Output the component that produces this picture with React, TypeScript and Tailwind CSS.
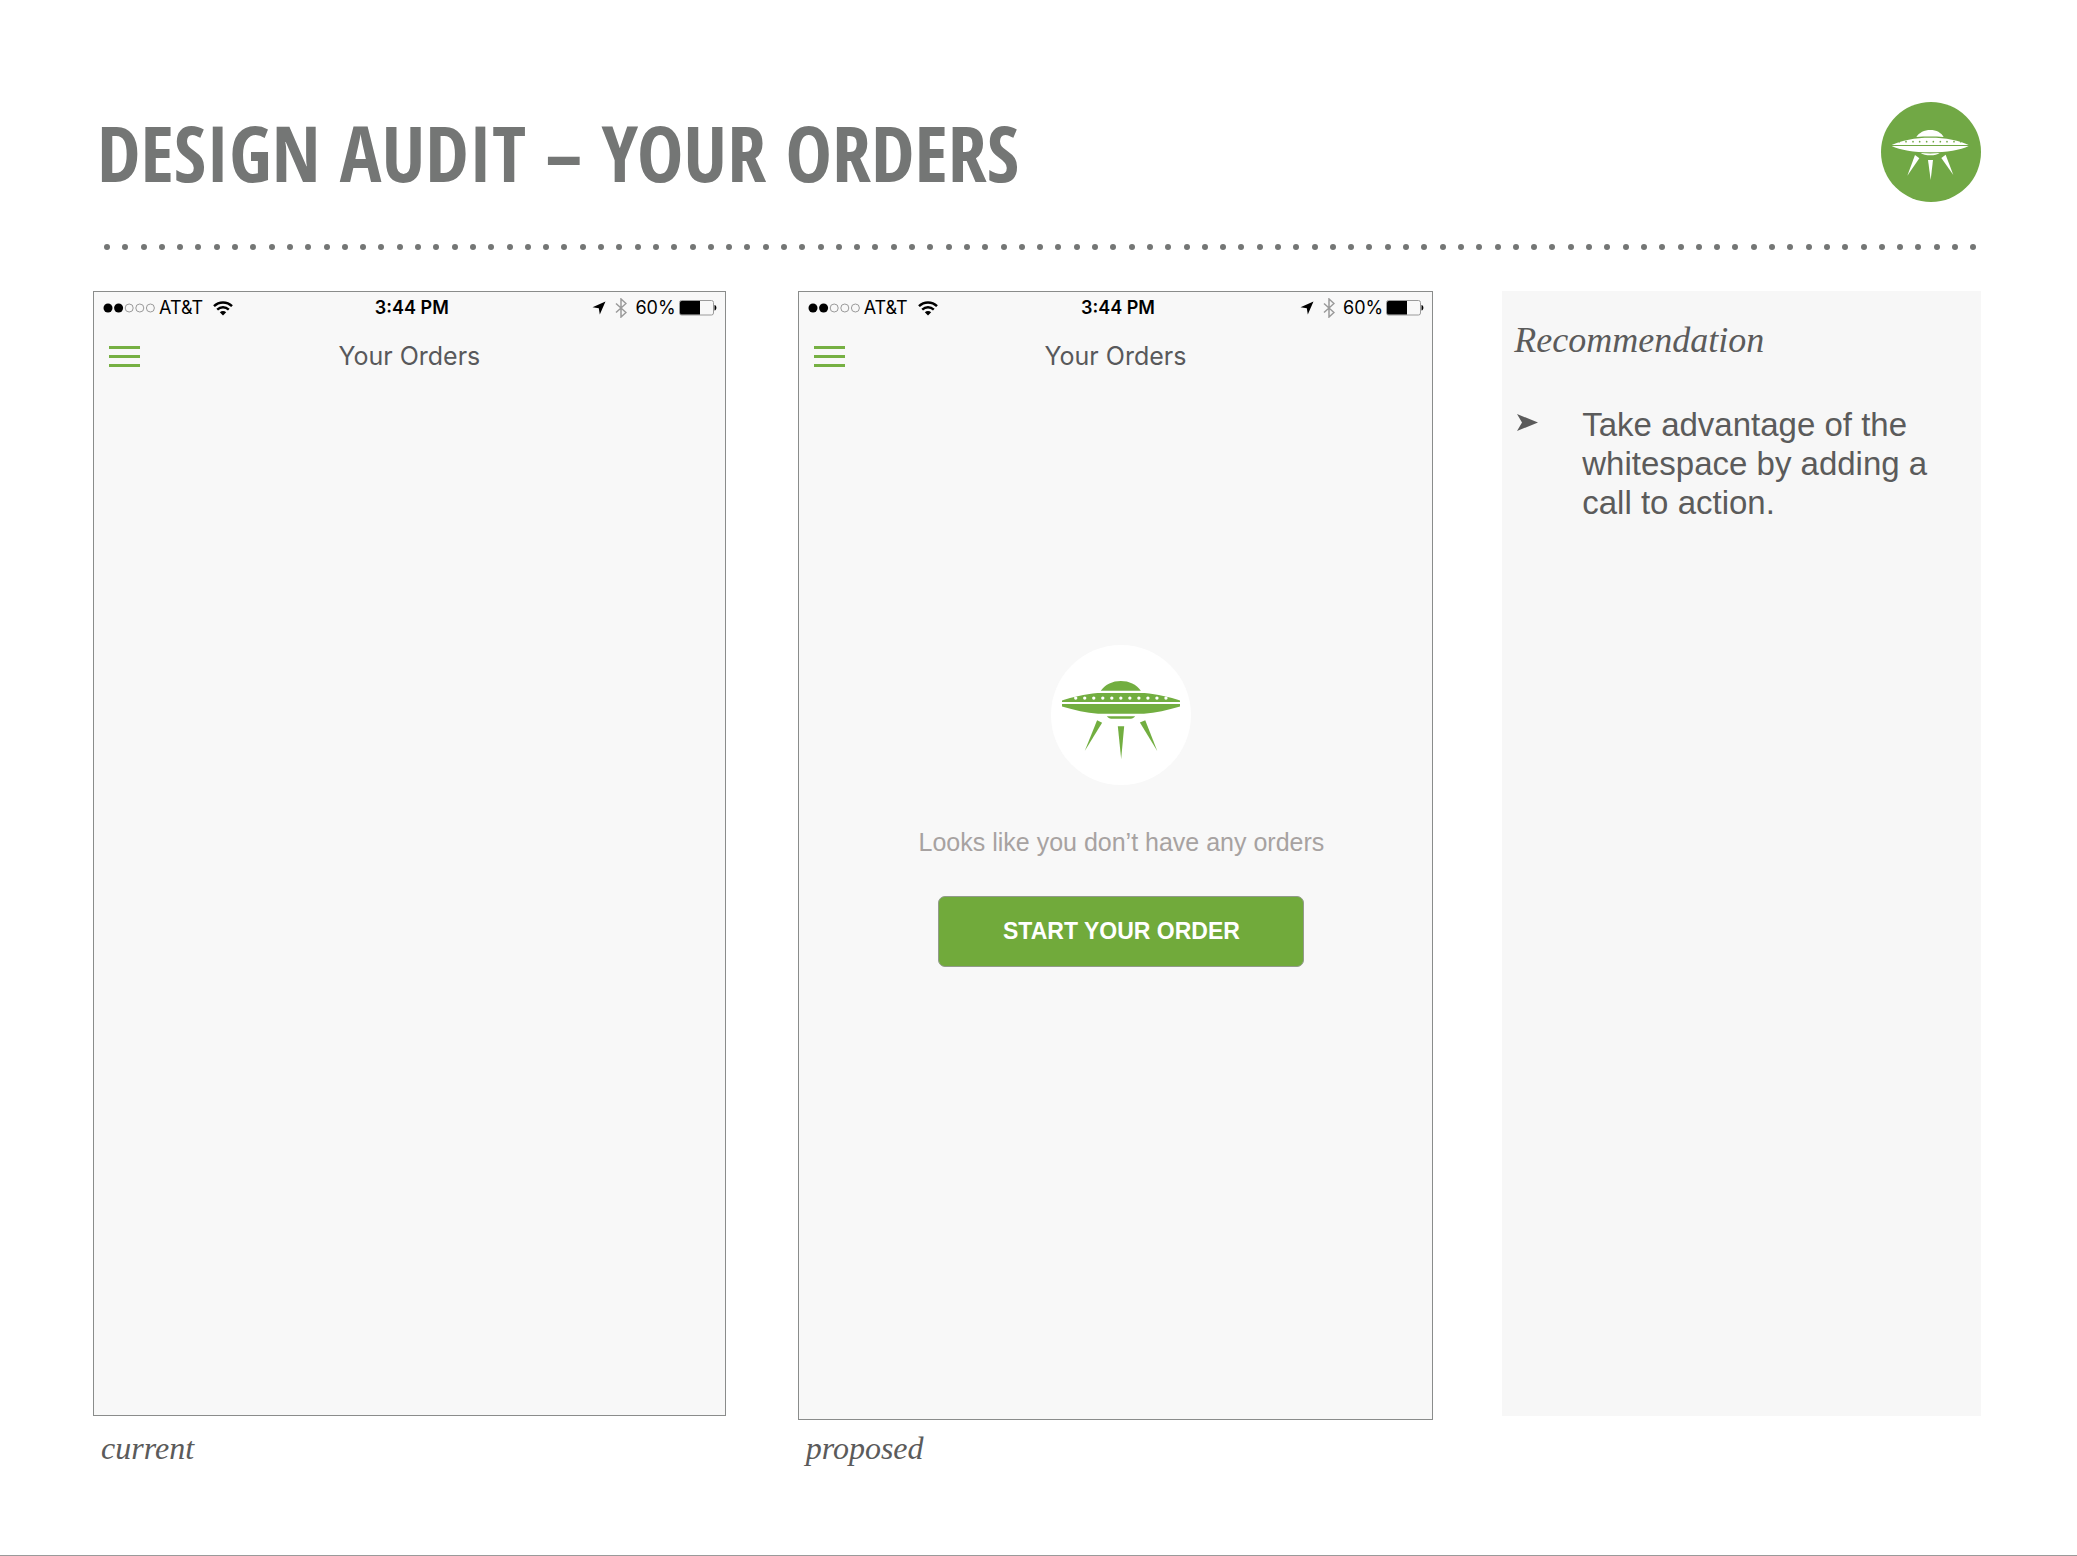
import type { ReactNode } from 'react';

const DOT_COUNT = 103;
const RIVETS = [108, 135, 162, 189, 216, 243, 270, 297, 324, 351, 378];
const LOGO_RIVETS = [177, 197, 218, 238, 259, 279, 300, 320, 341, 361];

function Logo() {
  return (
    <div className="size-[100px] shrink-0 rounded-full bg-[#71a845] text-white">
      <svg viewBox="122 66 300 300" className="size-full" fill="currentColor" role="img" aria-label="Logo">
        <path d="M228 171c8-13 24-21 42-21s33 8 40 21c-26-2-56-2-82 0z" />
        <path d="M154 195c28-14 70-22 116-22s88 8 115 22z" />
        <path d="M154 198h231c-24 12-66 19-115 19s-91-7-116-19z" />
        <path d="M241 219c19 2 38 2 57 0-6 5-16 7-28 7s-23-2-29-7z" />
        <path d="M224 225l13 10-36 52z" />
        <path d="M263 240h15l-7 60z" />
        <path d="M303 234l13-10 23 61z" />
        <g fill="#71a845">
          {LOGO_RIVETS.map((x) => (
            <circle key={x} cx={x} cy="185" r="2.5" />
          ))}
        </g>
      </svg>
    </div>
  );
}

function Ufo() {
  return (
    <svg viewBox="67 153 353 233" className="h-[78px] w-[118px]" fill="currentColor" aria-hidden="true">
      {/* dome */}
      <path d="M183 182C197 163 218 153 243 153s46 10 60 29z" />
      {/* saucer */}
      <path d="M67 216v-5c30-9 68-18 106-22h141c38 4 76 13 106 22v5z" />
      <path d="M67 222h353v7c-38 11-72 19-108 22H175c-36-3-70-11-108-22z" />
      <path d="M201 258h85c-4 4-8 7-13 8h-59c-5-1-9-4-13-8z" />
      {/* legs */}
      <path d="M172 270l15 8-52 84z" />
      <path d="M234 288h19l-9 98z" />
      <path d="M300 277l16-7 36 92z" />
      <g fill="#fff">
        {RIVETS.map((x) => (
          <circle key={x} cx={x} cy="204" r="5" />
        ))}
      </g>
    </svg>
  );
}

function StatusBar() {
  return (
    <div className="grid grid-cols-[1fr_auto_1fr] items-center pt-[2px] pl-[9px] pr-2 h-[30px] text-lg leading-[24px] text-black">
      <div className="flex items-center">
        <svg width="52" height="10" viewBox="0 0 52 10" aria-hidden="true">
          <circle cx="5" cy="5" r="4.5" />
          <circle cx="15.6" cy="5" r="4.5" />
          <g fill="none" stroke="#9a9a9a" strokeWidth="1">
            <circle cx="26.2" cy="5" r="4" />
            <circle cx="36.8" cy="5" r="4" />
            <circle cx="47.4" cy="5" r="4" />
          </g>
        </svg>
        <span className="ml-1">AT&amp;T</span>
        <svg className="ml-[10px]" width="20" height="15" viewBox="0 0 20 15" fill="none" stroke="#000" strokeWidth="2.4" aria-hidden="true">
          <path d="M1 5.2C6 .2 14 .2 19 5.2" />
          <path d="M4.2 8.6c3.4-3.2 8.2-3.2 11.6 0" />
          <path d="M10 14.5l-3.2-3.3c1.9-1.6 4.5-1.6 6.4 0z" fill="#000" stroke="none" />
        </svg>
      </div>
      <span className="pl-1 font-semibold">3:44 PM</span>
      <div className="flex items-center justify-end">
        <svg width="14" height="14" viewBox="0 0 14 14" aria-hidden="true">
          <path d="M13.5.5L7.8 13.5 6.8 7.2.5 6.3z" />
        </svg>
        <svg className="ml-[9px]" width="12" height="20" viewBox="0 0 12 20" fill="none" stroke="#9a9a9a" strokeWidth="1.5" aria-hidden="true">
          <path d="M1 5.5l10 9-5 4.5V1l5 4.5-10 9" />
        </svg>
        <span className="ml-2">60%</span>
        <svg className="ml-[3px]" width="38" height="16" viewBox="0 0 38 16" aria-hidden="true">
          <rect x=".5" y=".5" width="34" height="14.5" rx="2" fill="none" stroke="#9a9a9a" />
          <path d="M2.5 1H21v13.500H2.500A1.500 1.500 0 0 1 1 13V2.500A1.500 1.500 0 0 1 2.500 1z" />
          <path d="M35.500 5c2.500.5 2.500 5 0 5.500z" />
        </svg>
      </div>
    </div>
  );
}

function Phone({ children, className }: { children?: ReactNode; className: string }) {
  return (
    <div className={`border border-[#8a8c8b] bg-[#f8f8f8] font-['Inter',sans-serif] ${className}`}>
      <StatusBar />
      <div className="grid grid-cols-[1fr_auto_1fr] items-center px-[15px] h-[68px]">
        <button type="button" aria-label="Menu" className="flex w-[31px] flex-col gap-[6px]">
          <span className="h-[3px] w-full bg-[#76b043]" />
          <span className="h-[3px] w-full bg-[#76b043]" />
          <span className="h-[3px] w-full bg-[#76b043]" />
        </button>
        <h2 className="text-[25px] leading-[32px] text-[#58595b]">Your Orders</h2>
      </div>
      {children}
    </div>
  );
}

function EmptyOrders() {
  return (
    <div className="flex flex-col items-center pt-[255px] pl-3 font-['Liberation_Sans',sans-serif]">
      <div className="flex size-[140px] justify-center rounded-full bg-white pt-9 text-[#72ae40]">
        <Ufo />
      </div>
      <p className="mt-[42px] text-[25px] leading-[30px] text-[#a7a2a1]">Looks like you don’t have any orders</p>
      <button
        type="button"
        className="mt-[39px] h-[71px] w-[366px] rounded-[7px] border border-[#929b8b] bg-[#71aa3b] text-[23px] font-bold text-white"
      >
        START YOUR ORDER
      </button>
    </div>
  );
}

export default function App() {
  return (
    <main className="min-h-screen border-b border-[#9a9a9a] bg-white pt-[102px] pr-24 pl-[93px]">
      <header className="flex h-[100px] items-center justify-between pl-1">
        <h1 className="font-['Open_Sans_Condensed','Roboto_Condensed',sans-serif] text-[78px] leading-[100px] font-bold text-[#747675]">
          DESIGN AUDIT – YOUR ORDERS
        </h1>
        <Logo />
      </header>

      <div className="mt-[42px] flex justify-between pr-1 pl-[11px]">
        {Array.from({ length: DOT_COUNT }, (_, i) => (
          <span key={i} className="size-[6px] rounded-full bg-[#747675]" />
        ))}
      </div>

      <div className="mt-[41px] grid grid-cols-[636fr_636fr_479fr] gap-x-[69px] gap-y-2 text-[#5b5b5b]">
        <Phone className="mr-[3px] aspect-[633/1126] self-start" />
        <Phone className="aspect-[636/1130] self-start">
          <EmptyOrders />
        </Phone>

        <aside className="mb-1 bg-[#f7f7f7] px-3 pt-[25px]">
          <h2 className="font-['Liberation_Serif',serif] text-4xl leading-[48px] italic">Recommendation</h2>
          <ul className="mt-[41px] font-['Liberation_Sans',sans-serif] text-[33px] leading-[39px]">
            <li className="flex">
              <svg className="mt-[9px] mr-11 ml-[3px] shrink-0" width="21" height="17" viewBox="0 0 21 17" fill="currentColor" aria-hidden="true">
                <path d="M0 0l21 8.500L0 17l5-8.500z" />
              </svg>
              <p>Take advantage of the whitespace by adding a call to action.</p>
            </li>
          </ul>
        </aside>

        <p className="pl-2 font-['Liberation_Serif',serif] text-[32px] leading-[40px] italic">current</p>
        <p className="pl-2 font-['Liberation_Serif',serif] text-[32px] leading-[40px] italic">proposed</p>
      </div>
    </main>
  );
}
